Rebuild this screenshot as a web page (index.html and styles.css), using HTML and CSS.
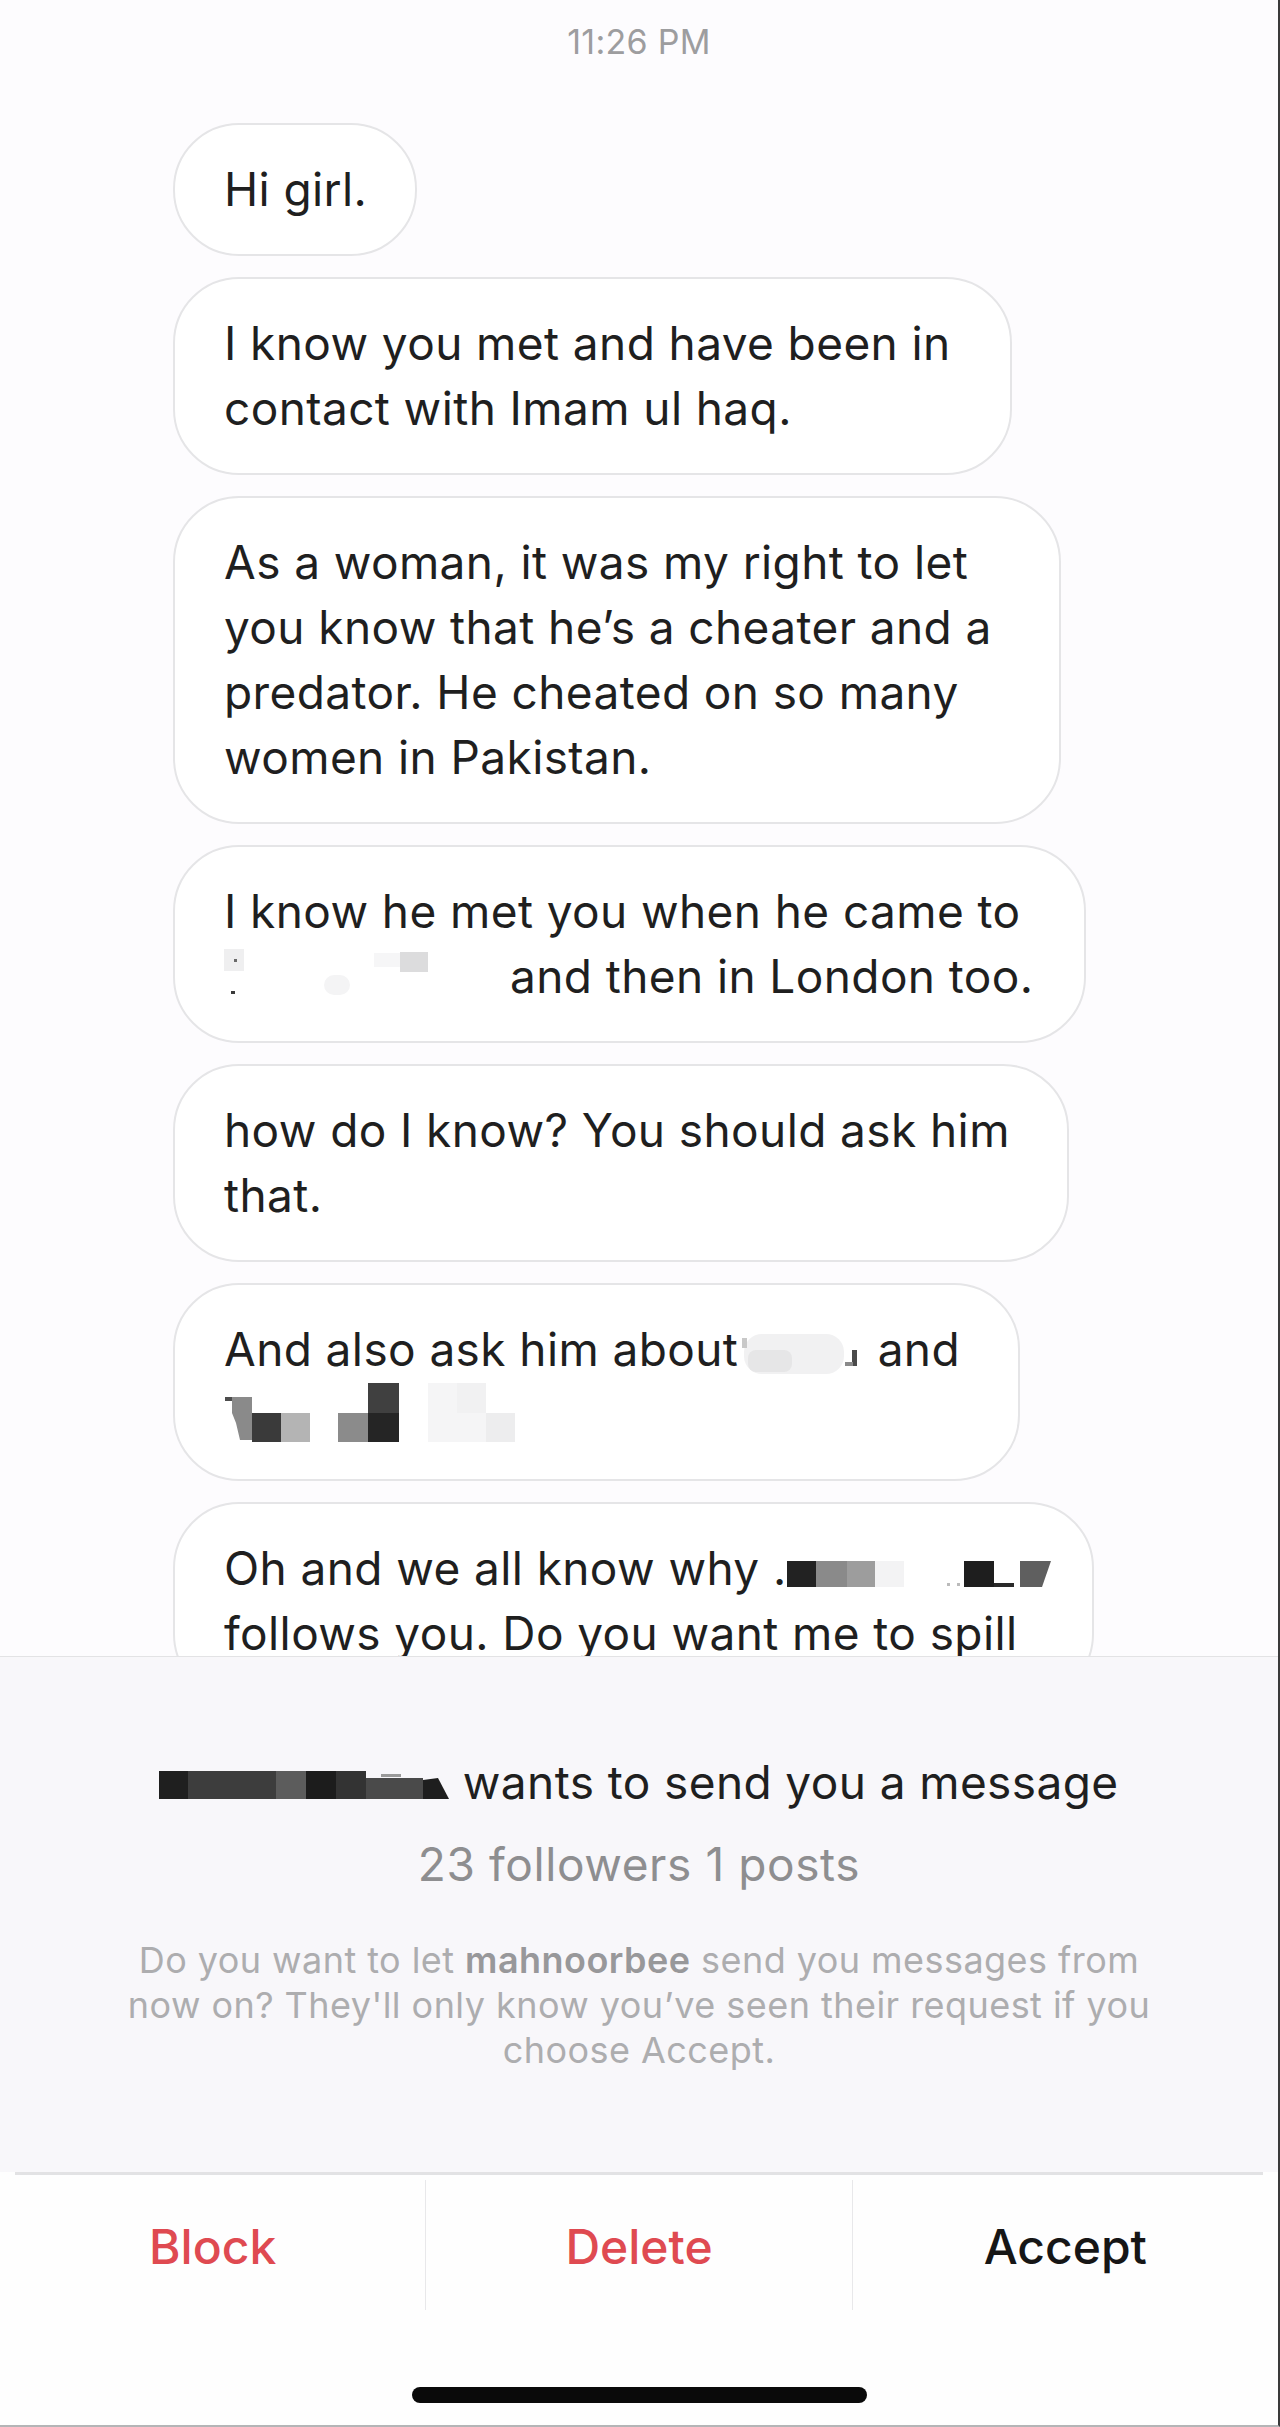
FILE: index.html
```html
<!DOCTYPE html>
<html lang="en">
<head>
<meta charset="utf-8">
<title>Message request</title>
<link rel="stylesheet" href="styles.css">
</head>
<body>
<div class="screen">
  <section class="chat">
    <div class="time">11:26 PM</div>
    <div class="thread">
      <div class="bubble bubble--hi">Hi girl.</div>
      <div class="bubble bubble--contact">I know you met and have been in<br>contact with Imam ul haq.</div>
      <div class="bubble bubble--woman">As a woman, it was my right to let<br>you know that he’s a cheater and a<br>predator. He cheated on so many<br>women in Pakistan.</div>
      <div class="bubble bubble--london">I know he met you when he came to<br><svg class="redact redact--city" width="286" height="50" viewBox="0 0 286 50"><rect x="0" y="0" width="20" height="22" fill="#efeff0"/><rect x="176" y="3" width="28" height="20" fill="#dcdcdd"/><rect x="150" y="4" width="26" height="14" fill="#f6f6f7"/><rect x="100" y="26" width="26" height="20" rx="10" fill="#f4f4f5"/><rect x="7" y="42" width="4" height="3" fill="#3a3a3a"/><rect x="10" y="10" width="3" height="3" fill="#6a6a6a"/></svg>and then in London too.</div>
      <div class="bubble bubble--ask">how do I know? You should ask him<br>that.</div>
      <div class="bubble bubble--about">And also ask him about<svg class="redact redact--blob" width="126" height="44" viewBox="0 0 126 44"><rect x="6" y="2" width="100" height="40" rx="18" fill="#f1f1f2"/><rect x="10" y="18" width="44" height="22" rx="8" fill="#e6e6e7"/><rect x="4" y="6" width="5" height="10" fill="#c8c8c8"/><rect x="114" y="18" width="5" height="16" fill="#4a4a4a"/><rect x="107" y="30" width="8" height="4" fill="#8a8a8a"/></svg> and<br><svg class="redact redact--names" width="292" height="60" viewBox="0 0 292 60"><rect x="1" y="14" width="16" height="4" fill="#4d4d4d"/><path d="M8 14 H28 V57 H16 L12 40 L8 30 Z" fill="#8a8a8a"/><rect x="28" y="30" width="29" height="29" fill="#3a3a3a"/><rect x="57" y="30" width="29" height="29" fill="#b4b4b4"/><rect x="114" y="30" width="30" height="29" fill="#8b8b8b"/><rect x="144" y="0" width="31" height="30" fill="#404040"/><rect x="144" y="30" width="31" height="29" fill="#252525"/><rect x="204" y="0" width="58" height="59" fill="#f5f5f6"/><rect x="262" y="30" width="29" height="29" fill="#ededee"/><rect x="233" y="0" width="29" height="30" fill="#f1f1f2"/></svg></div>
      <div class="bubble bubble--spill">Oh and we all know why .<svg class="redact redact--handle" width="264" height="26" viewBox="0 0 264 26"><rect x="0" y="0" width="29" height="26" fill="#222222"/><rect x="29" y="0" width="31" height="26" fill="#8a8a8a"/><rect x="60" y="0" width="28" height="26" fill="#9d9d9d"/><rect x="88" y="0" width="29" height="26" fill="#f3f3f4"/><rect x="160" y="22" width="3" height="3" fill="#bbbbbb"/><rect x="170" y="22" width="3" height="3" fill="#bbbbbb"/><rect x="177" y="0" width="30" height="26" fill="#1e1e1e"/><rect x="207" y="22" width="20" height="4" fill="#2a2a2a"/><polygon points="233,0 264,0 255,26 233,26" fill="#5f5f5f"/></svg><br>follows you. Do you want me to spill</div>
    </div>
  </section>

  <section class="request">
    <p class="req-title"><svg class="redact redact--user" width="290" height="30" viewBox="0 0 290 30"><rect x="0" y="0" width="29" height="28" fill="#1f1f1f"/><rect x="29" y="0" width="88" height="28" fill="#3d3d3d"/><rect x="117" y="0" width="30" height="28" fill="#5c5c5c"/><rect x="147" y="0" width="30" height="28" fill="#1c1c1c"/><rect x="177" y="0" width="30" height="28" fill="#333333"/><rect x="207" y="7" width="57" height="21" fill="#4a4a4a"/><rect x="222" y="3" width="20" height="3" fill="#9a9a9a"/><polygon points="264,9 279,7 290,28 264,28" fill="#1e1e1e"/></svg> wants to send you a message</p>
    <p class="req-stats">23 followers 1 posts</p>
    <p class="req-note">Do you want to let <b>mahnoorbee</b> send you messages from<br>now on? They'll only know you’ve seen their request if you<br>choose Accept.</p>
  </section>

  <footer class="bottom">
    <div class="divider"></div>
    <div class="actions">
      <button class="action action--danger">Block</button>
      <button class="action action--danger">Delete</button>
      <button class="action">Accept</button>
    </div>
    <div class="home-indicator"></div>
  </footer>
</div>
</body>
</html>
```

FILE: styles.css
```css
* {
  box-sizing: border-box;
  margin: 0;
  padding: 0;
}

html, body {
  margin: 0;
  background: #fdfcfe;
}

body {
  font-family: Inter, "Liberation Sans", "DejaVu Sans", sans-serif;
  color: #1f1f1f;
}

.screen {
  width: 1280px;
  height: 2427px;
  border-right: 2px solid #3a3a3a;
  border-bottom: 2px solid #b4b4b6;
  background: #fdfcfe;
  display: flex;
  flex-direction: column;
  overflow: hidden;
}

/* ---------- chat ---------- */
.chat {
  flex: none;
  height: 1656px;
  overflow: hidden;
}

.time {
  padding-top: 20px;
  margin-bottom: 59px;
  font-size: 34px;
  line-height: 44px;
  letter-spacing: 0.3px;
  text-align: center;
  color: #9d9d9f;
}

.thread {
  display: flex;
  flex-direction: column;
  align-items: flex-start;
  gap: 21px;
  padding-left: 173px;
}

.bubble {
  background: #ffffff;
  border: 2px solid #e5e5e7;
  border-radius: 66px;
  padding: 32px 0 32px 49px;
  font-size: 46px;
  line-height: 65px;
  letter-spacing: 0.4px;
  white-space: nowrap;
  color: #1f1f1f;
}

.bubble--hi { width: 244px; }
.bubble--contact { width: 839px; }
.bubble--woman { width: 888px; }
.bubble--london { width: 913px; }
.bubble--ask { width: 896px; }
.bubble--about { width: 847px; }
.bubble--spill { width: 921px; }

.redact {
  display: inline-block;
}

.redact--city { vertical-align: -6px; }
.redact--blob { vertical-align: -10px; }
.redact--names { vertical-align: -12px; }
.redact--handle { vertical-align: -2px; }
.redact--user { vertical-align: -2px; }

/* ---------- request panel ---------- */
.request {
  flex: none;
  height: 516px;
  border-top: 1px solid #e3e3e5;
  background: #f8f7fa;
  text-align: center;
  padding-top: 95px;
}

.req-title {
  font-size: 46px;
  line-height: 60px;
  letter-spacing: 0.4px;
  color: #1f1f1f;
}

.req-stats {
  margin-top: 22px;
  font-size: 46px;
  line-height: 60px;
  letter-spacing: 0.6px;
  color: #8e8e90;
}

.req-note {
  margin-top: 44px;
  font-size: 36px;
  line-height: 45px;
  letter-spacing: 0.45px;
  color: #adadaf;
}

.req-note b {
  font-weight: 600;
  color: #98989a;
}

/* ---------- bottom actions ---------- */
.bottom {
  flex: 1;
  background: #fefefe;
}

.divider {
  height: 3px;
  margin: 0 15px;
  background: #e2e2e4;
}

.actions {
  display: flex;
  margin-top: 5px;
  height: 130px;
}

.action {
  flex: 1;
  border: none;
  background: transparent;
  font-family: inherit;
  font-size: 48px;
  font-weight: 500;
  padding-top: 4px;
  line-height: 126px;
  text-align: center;
  color: #161616;
}

.action + .action {
  border-left: 1px solid #e8e8ea;
}

.action--danger {
  color: #df4a51;
}

.home-indicator {
  width: 455px;
  height: 16px;
  margin: 77px auto 0;
  border-radius: 8px;
  background: #0a0a0a;
}
```
